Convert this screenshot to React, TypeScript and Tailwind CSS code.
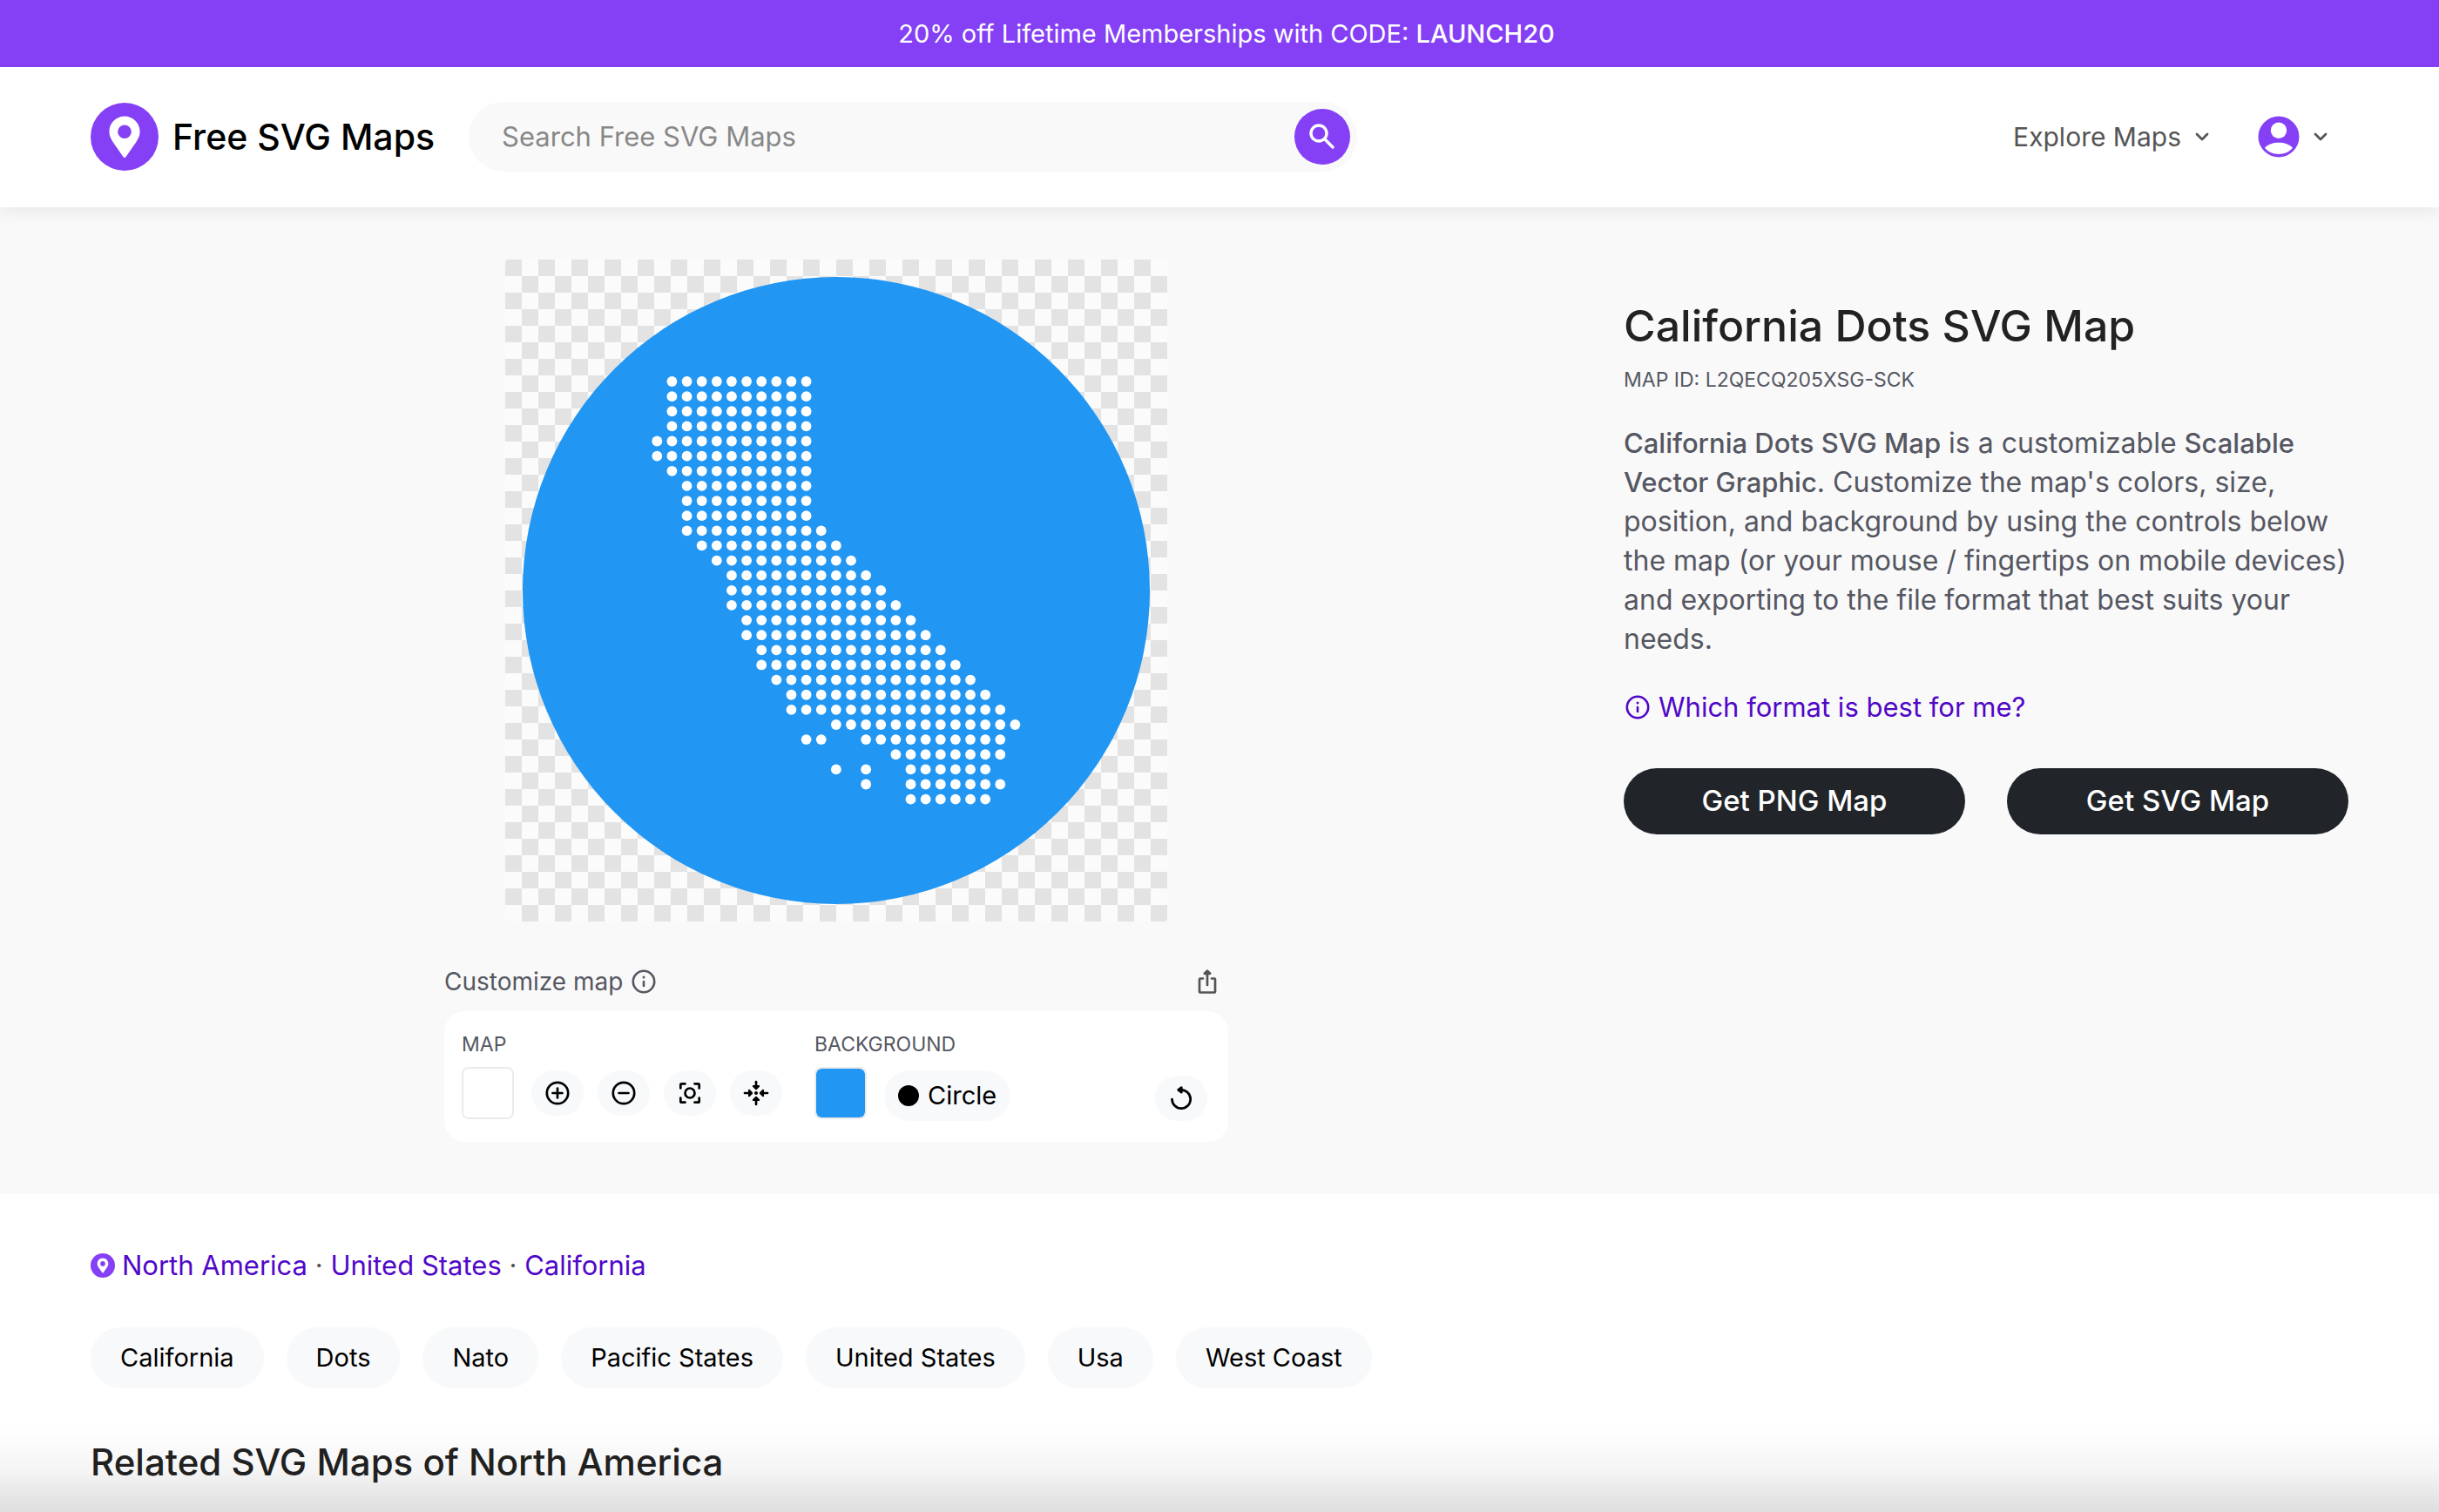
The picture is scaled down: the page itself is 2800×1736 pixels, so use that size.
import type { ReactNode } from "react";

const PURPLE = "#8540f5";

// First and last filled column of every run of dots, row by row.
const DOT_ROWS: [number, number][][] = [
  [[1, 10]],
  [[1, 10]],
  [[1, 10]],
  [[1, 10]],
  [[0, 10]],
  [[0, 10]],
  [[1, 10]],
  [[2, 10]],
  [[2, 10]],
  [[2, 10]],
  [[2, 11]],
  [[3, 12]],
  [[4, 13]],
  [[5, 14]],
  [[5, 15]],
  [[5, 16]],
  [[6, 17]],
  [[6, 18]],
  [[7, 19]],
  [[7, 20]],
  [[8, 21]],
  [[9, 22]],
  [[9, 23]],
  [[12, 24]],
  [[10, 11], [14, 23]],
  [[16, 23]],
  [[12, 12], [14, 14], [17, 22]],
  [[14, 14], [17, 23]],
  [[17, 22]],
];

const TAGS = ["California", "Dots", "Nato", "Pacific States", "United States", "Usa", "West Coast"];
const CRUMBS = ["North America", "United States", "California"];

function PinLogo({ className }: { className: string }) {
  return (
    <svg viewBox="0 0 78 78" className={className} aria-hidden="true">
      <circle cx="39" cy="39" r="39" fill={PURPLE} />
      <path
        d="M39 15.5c-9.8 0-17.6 7.9-17.6 17.7 0 4.8 2 8.2 4.2 11.8L37.4 62c.8 1.2 2.4 1.2 3.2 0L52.400 45c2.200-3.600 4.200-7 4.200-11.800C56.600 23.400 48.800 15.500 39 15.500Z"
        fill="#fff"
      />
      <circle cx="39" cy="33.200" r="7.800" fill={PURPLE} />
    </svg>
  );
}

function InfoIcon({ className }: { className: string }) {
  return (
    <svg viewBox="0 0 28 28" className={className} fill="none" stroke="currentColor" aria-hidden="true">
      <circle cx="14" cy="14" r="12.200" strokeWidth="2.600" />
      <circle cx="14" cy="9" r="1.500" fill="currentColor" stroke="none" />
      <path d="M14 14v5" strokeWidth="2.600" strokeLinecap="round" />
    </svg>
  );
}

function Chevron() {
  return (
    <svg viewBox="0 0 16 16" className="size-4 text-[#555]" fill="none" stroke="currentColor" strokeWidth="2.800" strokeLinecap="round" strokeLinejoin="round" aria-hidden="true">
      <path d="M2 5l6 6 6-6" />
    </svg>
  );
}

function ToolButton({ label, children }: { label: string; children: ReactNode }) {
  return (
    <button type="button" aria-label={label} className="flex h-[52px] w-[60px] items-center justify-center rounded-full bg-[#f8f9fa] text-black">
      <svg viewBox="0 0 32 32" className="size-8" fill="none" stroke="currentColor" strokeWidth="2.700" strokeLinecap="round" strokeLinejoin="round" aria-hidden="true">
        {children}
      </svg>
    </button>
  );
}

function Swatch({ id, value }: { id: string; value: string }) {
  return (
    <input
      id={id}
      type="color"
      defaultValue={value}
      className="size-[60px] rounded-lg border-2 border-[#ebebeb] bg-white p-0 [&::-webkit-color-swatch]:rounded-md [&::-webkit-color-swatch]:border-0 [&::-webkit-color-swatch-wrapper]:p-0"
    />
  );
}

function Header() {
  return (
    <header className="relative z-10 flex h-[161px] items-center bg-white px-[104px] pb-0.5 shadow-[0_8px_16px_rgba(0,0,0,0.055)]">
      <a href="#home" className="flex shrink-0 items-center gap-4 text-[41px] leading-[50px] font-medium text-black">
        <PinLogo className="size-[78px]" />
        Free SVG Maps
      </a>
      <form role="search" onSubmit={(e) => e.preventDefault()} className="ml-[39px] flex h-20 w-[1020px] items-center rounded-full bg-[#f9f9f9] pr-2 pl-[38px]">
        <input
          type="search"
          aria-label="Search Free SVG Maps"
          placeholder="Search Free SVG Maps"
          className="min-w-0 flex-1 bg-transparent text-[31px] leading-10 text-[#222] outline-none placeholder:text-[#888]"
        />
        <button type="submit" aria-label="Search" className="flex size-16 items-center justify-center rounded-full bg-[#8540f5] text-white">
          <svg viewBox="0 0 32 32" className="size-8" fill="none" stroke="currentColor" strokeWidth="3.400" strokeLinecap="round" aria-hidden="true">
            <circle cx="12" cy="12" r="9" />
            <path d="M18.800 18.800l9.200 9.200" />
          </svg>
        </button>
      </form>
      <nav className="ml-auto flex items-center gap-14 pr-6">
        <button type="button" className="flex items-center gap-4 text-[30px] leading-10 text-[#555]">
          Explore Maps
          <Chevron />
        </button>
        <button type="button" aria-label="Account" className="flex items-center gap-4">
          <svg viewBox="0 0 48 48" className="size-12" aria-hidden="true">
            <circle cx="24" cy="24" r="23.500" fill={PURPLE} />
            <circle cx="24" cy="16.800" r="9.200" fill="#fff" />
            <path d="M8 36.800c4-4.200 9.500-6 16-6s12 1.800 16 6c-4.200 4.800-9.800 7.200-16 7.200s-11.800-2.400-16-7.200Z" fill="#fff" />
          </svg>
          <Chevron />
        </button>
      </nav>
    </header>
  );
}

function MapCanvas() {
  return (
    <svg viewBox="0 0 760 760" className="size-[760px]" role="img" aria-label="Dotted map of California">
      <defs>
        <pattern id="checker" width="38" height="38" patternUnits="userSpaceOnUse">
          <rect width="38" height="38" fill="#fbfbfb" />
          <path d="M0 0h19v19H0zM19 19h19v19H19z" fill="#e3e3e3" />
        </pattern>
      </defs>
      <rect width="760" height="760" rx="4" fill="url(#checker)" />
      <circle cx="380" cy="380" r="360" fill="#2196f3" />
      <g fill="#fff">
        {DOT_ROWS.map((runs, row) =>
          runs.flatMap(([from, to]) =>
            Array.from({ length: to - from + 1 }, (_, i) => (
              <circle key={`${row}-${from + i}`} cx={174.300 + (from + i) * 17.130} cy={140 + row * 17.130} r="5.900" />
            )),
          ),
        )}
      </g>
    </svg>
  );
}

function Customizer() {
  return (
    <div className="w-[900px]">
      <div className="flex h-11 items-center justify-between pr-3 text-[#555762]">
        <div className="flex items-center gap-2.5 text-[28px] leading-8">
          Customize map
          <button type="button" aria-label="About customizing">
            <InfoIcon className="size-7" />
          </button>
        </div>
        <button type="button" aria-label="Share" className="text-[#555]">
          <svg viewBox="0 0 24 30" className="h-[30px] w-6" fill="none" stroke="currentColor" strokeWidth="2.700" strokeLinecap="round" strokeLinejoin="round" aria-hidden="true">
            <path d="M7 11.500H4q-1 0-1 1V26q0 1.500 1.500 1.500h15q1.500 0 1.500-1.500V12.500q0-1-1-1h-3M12 19V4" />
            <path d="M8.800 5.800L12 2.600l3.200 3.200Z" fill="currentColor" />
          </svg>
        </button>
      </div>
      <div className="mt-3 flex rounded-3xl bg-white px-5 pt-[26px] pb-6">
        <div>
          <label htmlFor="map-color" className="block text-[23px] leading-6 text-[#555762]">
            MAP
          </label>
          <div className="mt-3.5 flex items-center gap-4">
            <Swatch id="map-color" value="#ffffff" />
            <div className="ml-1 flex gap-4">
              <ToolButton label="Zoom in">
                <circle cx="16" cy="16" r="12.200" />
                <path d="M10.500 16h11M16 10.500v11" />
              </ToolButton>
              <ToolButton label="Zoom out">
                <circle cx="16" cy="16" r="12.200" />
                <path d="M10.500 16h11" />
              </ToolButton>
              <ToolButton label="Fit map">
                <circle cx="16" cy="16" r="5.500" />
                <path d="M5.300 10.500V6.500q0-1.200 1.200-1.200h4M21.500 5.300h4q1.200 0 1.200 1.200v4M26.700 21.500v4q0 1.200-1.200 1.200h-4M10.500 26.700h-4q-1.200 0-1.200-1.200v-4" />
              </ToolButton>
              <ToolButton label="Center map">
                <circle cx="16" cy="16" r="2" fill="currentColor" stroke="none" />
                <path d="M3 16h5M29 16h-5M16 3v5M16 29v-5" />
                <path d="M8 12.800l3.200 3.200L8 19.200ZM24 12.800L20.800 16l3.200 3.200ZM12.800 8l3.200 3.200L19.200 8ZM12.800 24l3.200-3.200 3.200 3.200Z" fill="currentColor" strokeWidth="2" />
              </ToolButton>
            </div>
          </div>
        </div>
        <div className="ml-[37px]">
          <label htmlFor="background-color" className="block text-[23px] leading-6 text-[#555762]">
            BACKGROUND
          </label>
          <div className="mt-3.5 flex items-start gap-5">
            <Swatch id="background-color" value="#2196f3" />
            <button type="button" className="mt-1 flex h-[58px] items-center gap-2.5 rounded-full bg-[#f8f9fa] px-4 text-[29px] leading-8 text-black">
              <span className="size-6 rounded-full bg-black" />
              Circle
            </button>
          </div>
        </div>
        <div className="mr-1 ml-auto self-end">
          <ToolButton label="Reset">
            <path d="M5.500 17a10.600 10.600 0 1 0 10.600-10.600" />
            <path d="M16.300 3.600v5.600l-3.600-2.800Z" fill="currentColor" />
          </ToolButton>
        </div>
      </div>
    </div>
  );
}

function Details() {
  return (
    <section className="pt-[46px] text-[#555762]">
      <h1 className="text-[50px] leading-[60px] font-medium text-[#222]">California Dots SVG Map</h1>
      <p className="mt-3.5 text-[23px] leading-9">MAP ID: L2QECQ205XSG-SCK</p>
      <p className="mt-8 text-[32px] leading-[45px]">
        <strong className="text-[31px] font-medium">California Dots SVG Map</strong> is a customizable <strong className="text-[31px] font-medium">Scalable Vector Graphic</strong>.
        Customize the map's colors, size, position, and background by using the controls below the map (or your mouse / fingertips on mobile devices) and exporting to the file
        format that best suits your needs.
      </p>
      <a href="#formats" className="mt-9 flex items-center gap-2.5 text-[31px] leading-10 text-[#5107c8]">
        <InfoIcon className="ml-0.5 size-7" />
        Which format is best for me?
      </a>
      <div className="mt-[50px] grid grid-cols-2 gap-12">
        <button type="button" className="h-[76px] rounded-full bg-[#212529] text-[33px] font-medium text-white">
          Get PNG Map
        </button>
        <button type="button" className="h-[76px] rounded-full bg-[#212529] text-[33px] font-medium text-white">
          Get SVG Map
        </button>
      </div>
    </section>
  );
}

export default function App() {
  return (
    <div className="min-h-screen bg-white font-['Inter',sans-serif]">
      <p className="flex h-[77px] items-center justify-center bg-[#8540f5] pl-4 text-[29px] leading-10 whitespace-pre text-white">
        20% off Lifetime Memberships with CODE: <strong className="font-medium">LAUNCH20</strong>
      </p>
      <Header />
      <main>
        <div className="grid grid-cols-[2fr_1fr] bg-[#f9f9f9] px-20 py-[60px]">
          <div className="flex flex-col items-center gap-[47px] px-6">
            <MapCanvas />
            <Customizer />
          </div>
          <div className="px-6">
            <Details />
          </div>
        </div>
        <div className="px-[104px] pt-[62px] pb-8">
          <nav aria-label="Breadcrumb" className="flex items-center gap-2 text-[31px] leading-10">
            <PinLogo className="size-7" />
            <ol className="flex">
              {CRUMBS.map((crumb, i) => (
                <li key={crumb} className="flex whitespace-pre">
                  {i > 0 && <span className="text-[#555]"> · </span>}
                  <a href={`#${crumb}`} className="text-[#5107c8]">
                    {crumb}
                  </a>
                </li>
              ))}
            </ol>
          </nav>
          <ul className="mt-[51px] flex flex-wrap gap-[26px]">
            {TAGS.map((tag) => (
              <li key={tag}>
                <a href={`#${tag}`} className="flex h-[70px] items-center rounded-full bg-[#f8f9fa] px-[34px] text-[29px] text-black">
                  {tag}
                </a>
              </li>
            ))}
          </ul>
          <h2 className="mt-[60px] text-[42px] leading-[50px] font-medium text-[#222]">Related SVG Maps of North America</h2>
        </div>
      </main>
      <div className="pointer-events-none fixed inset-x-0 bottom-0 h-24 bg-linear-to-b from-black/0 via-black/4 to-black/13" />
    </div>
  );
}
